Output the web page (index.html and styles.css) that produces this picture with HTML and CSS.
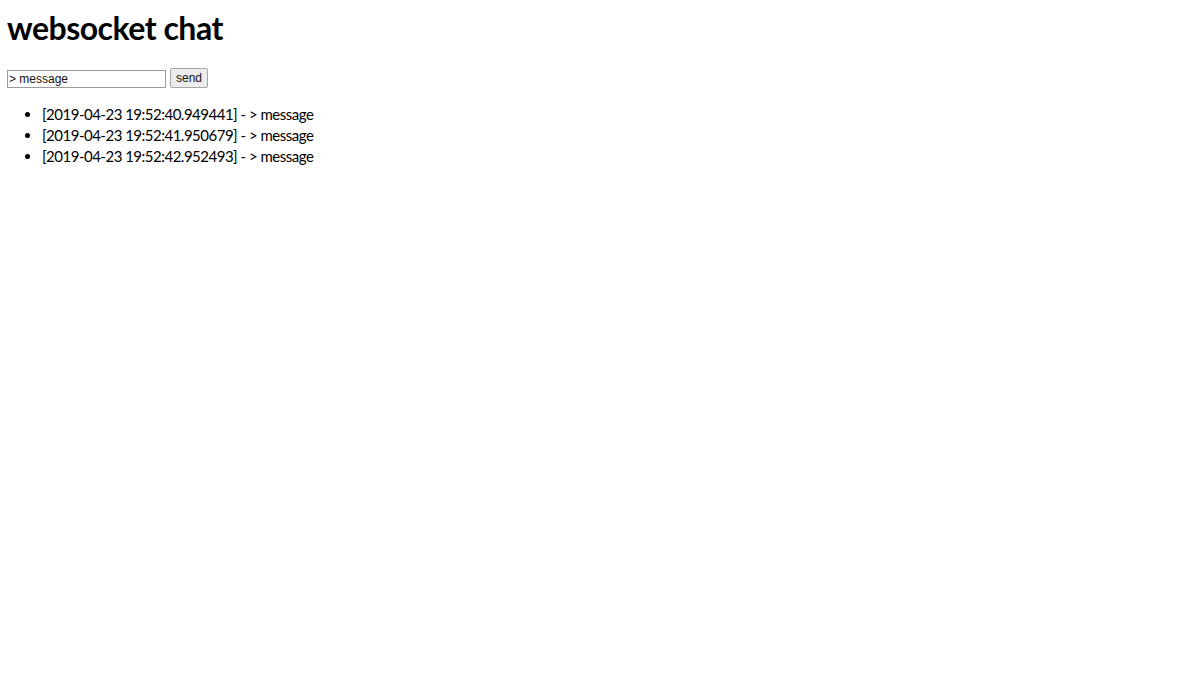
FILE: index.html
```html
<!DOCTYPE html>
<html lang="en">

<head>
    <meta charset="UTF-8">
    <title>websocket chat</title>

    <link rel="stylesheet" href="styles.css">
</head>

<body>
    <h1>websocket chat</h1>
    <form class="send-form">
        <input type="text" id="message" value="> message">
        <button type="button">send</button>
    </form>
    <ul class="messages">
        <li>[2019-04-23 19:52:40.949441] - &gt; message</li>
        <li>[2019-04-23 19:52:41.950679] - &gt; message</li>
        <li>[2019-04-23 19:52:42.952493] - &gt; message</li>
    </ul>
</body>

</html>
```

FILE: styles.css
```css
body {
    font-family: Lato, sans-serif;
    margin: 0;
    padding: 8px 7px;
    background-color: #fff;
    color: #000;
}

h1 {
    font-size: 32px;
    line-height: 40px;
    letter-spacing: -0.5px;
    margin: 0 0 20px;
}

.send-form {
    display: flex;
    align-items: flex-end;
    gap: 4px;
}

.send-form input,
.send-form button {
    font-family: "Liberation Sans", Arial, sans-serif;
    font-size: 12px;
    color: #111;
    box-sizing: border-box;
    margin: 0;
}

.send-form input {
    width: 159px;
    height: 18px;
    padding: 0 1px;
    border: 1px solid #9a9a9a;
}

.send-form button {
    height: 20px;
    padding: 0 5px;
    background-color: #ececec;
    border: 1px solid #a6a6a6;
    border-radius: 2px;
}

.messages {
    margin: 16px 0 0;
    padding-left: 35px;
    font-size: 15px;
    line-height: 21px;
    letter-spacing: -0.5px;
}
```
